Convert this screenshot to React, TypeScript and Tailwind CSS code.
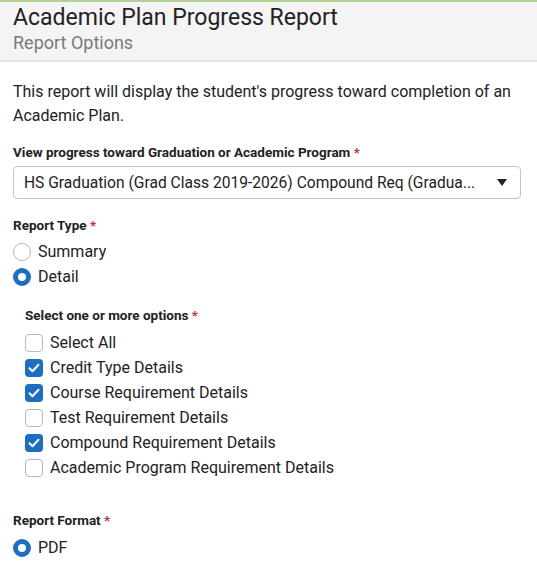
import { useState } from 'react'

const font = { fontFamily: 'Roboto, "Noto Sans", sans-serif' }

const OPTIONS = [
  'Select All',
  'Credit Type Details',
  'Course Requirement Details',
  'Test Requirement Details',
  'Compound Requirement Details',
  'Academic Program Requirement Details',
]

export default function App() {
  const [type, setType] = useState<'summary' | 'detail'>('detail')
  const [checked, setChecked] = useState<Record<string, boolean>>({
    'Credit Type Details': true,
    'Course Requirement Details': true,
    'Compound Requirement Details': true,
  })

  return (
    <div className="min-h-screen w-[537px] bg-white text-[#222]" style={font}>
      <div className="h-[2px] bg-[#b3d296]" />
      <header className="border-b-2 border-[#e4e4e4] bg-[#f4f4f4] px-[13px] pt-[3px] pb-[5px]">
        <h1 className="text-[23px] leading-[26px] text-[#222]">Academic Plan Progress Report</h1>
        <p className="text-[18px] leading-[24px] text-[#7a7a7a]">Report Options</p>
      </header>

      <div className="px-[13px]">
        <p className="mt-[18px] text-[16px] leading-[24px] text-[#222]">
          This report will display the student's progress toward completion of an Academic Plan.
        </p>

        <Label className="mt-[14px]">View progress toward Graduation or Academic Program</Label>
        <div className="mt-[4px] flex h-[33px] w-[508px] items-center justify-between rounded-[4px] border border-[#c4c4c4] bg-white pr-[13px] pl-[10px]">
          <span className="text-[15.6px] leading-[20px] text-[#222]">
            HS Graduation (Grad Class 2019-2026) Compound Req (Gradua...
          </span>
          <svg width="10" height="7" viewBox="0 0 10 7" aria-hidden>
            <path d="M0 0h10L5 7z" fill="#222" />
          </svg>
        </div>

        <Label className="mt-[16px]">Report Type</Label>
        <div className="mt-[4px]">
          <Radio label="Summary" on={type === 'summary'} onClick={() => setType('summary')} />
          <Radio label="Detail" on={type === 'detail'} onClick={() => setType('detail')} />
        </div>

        <div className="pl-[12px]">
          <Label className="mt-[16px]">Select one or more options</Label>
          <div className="mt-[5px]">
            {OPTIONS.map((o) => (
              <Check
                key={o}
                label={o}
                on={!!checked[o]}
                onClick={() => setChecked((c) => ({ ...c, [o]: !c[o] }))}
              />
            ))}
          </div>
        </div>

        <Label className="mt-[30px]">Report Format</Label>
        <div className="mt-[5px]">
          <Radio label="PDF" on onClick={() => {}} />
        </div>
      </div>
    </div>
  )
}

function Label({ children, className = '' }: { children: React.ReactNode; className?: string }) {
  return (
    <div className={`text-[13.5px] leading-[20px] font-bold text-[#222] ${className}`}>
      {children} <span className="text-[#d9262c]">*</span>
    </div>
  )
}

function Radio({ label, on, onClick }: { label: string; on: boolean; onClick: () => void }) {
  return (
    <button type="button" onClick={onClick} className="flex h-[25px] items-center gap-[7px]">
      <span
        className={
          on
            ? 'h-[18px] w-[18px] rounded-full border-[5px] border-[#1b6ec2] bg-white'
            : 'h-[18px] w-[18px] rounded-full border-[1.5px] border-[#b5b5b5] bg-white'
        }
      />
      <span className="text-[16px] leading-[20px] text-[#222]">{label}</span>
    </button>
  )
}

function Check({ label, on, onClick }: { label: string; on: boolean; onClick: () => void }) {
  return (
    <button type="button" onClick={onClick} className="flex h-[25px] items-center gap-[7px]">
      {on ? (
        <span className="grid h-[18px] w-[18px] place-items-center rounded-[4px] bg-[#1b6ec2]">
          <svg width="12" height="10" viewBox="0 0 12 10" aria-hidden>
            <path d="M1.5 5.2l3 3 6-6.4" stroke="white" strokeWidth="2" fill="none" strokeLinecap="round" strokeLinejoin="round" />
          </svg>
        </span>
      ) : (
        <span className="h-[18px] w-[18px] rounded-[4px] border border-[#b9b9b9] bg-white" />
      )}
      <span className="text-[16px] leading-[20px] text-[#222]">{label}</span>
    </button>
  )
}
